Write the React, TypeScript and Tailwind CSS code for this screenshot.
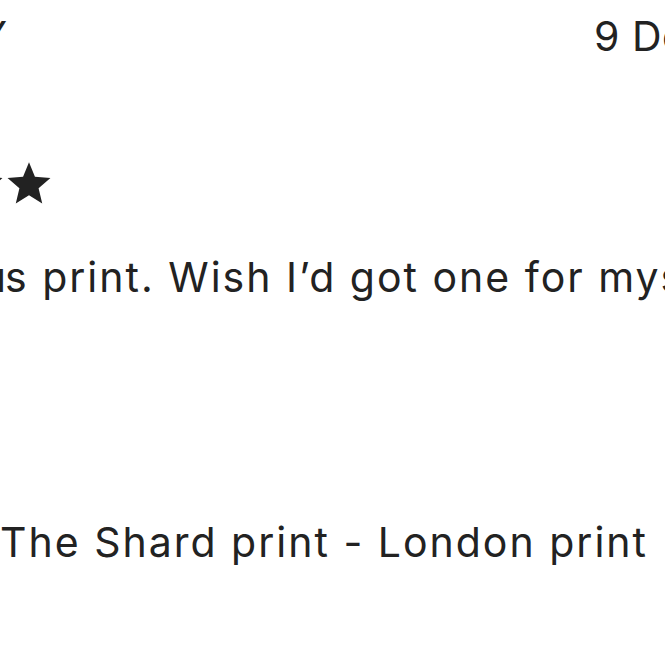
import { ReactNode } from "react";

const font = { fontFamily: "Inter, 'Noto Sans', sans-serif" };

function Star() {
  return (
    <svg viewBox="0 0 24 24" className="h-[46px] w-[46px] shrink-0" fill="#222222">
      <path d="M12 1.2l3.1 7.6 8.1.6-6.2 5.3 1.9 8-6.9-4.3-6.9 4.3 1.9-8-6.2-5.3 8.1-.6z" />
    </svg>
  );
}

// box whose content is right aligned and overflows off the left edge
function EndsAt({ w, children }: { w: string; children: ReactNode }) {
  return <div className={`flex shrink-0 justify-end whitespace-nowrap ${w}`}>{children}</div>;
}

export default function App() {
  return (
    <div
      className="h-[665px] w-[665px] overflow-hidden bg-white text-[41px] leading-[48px] tracking-[2px] text-[#222222]"
      style={font}
    >
      <div className="flex pt-[12px]">
        <EndsAt w="w-[9px]">
          <span>KATY</span>
        </EndsAt>
        <span className="ml-[585px] whitespace-nowrap tracking-[0.5px]">9 Dec, 2021</span>
      </div>

      <div className="mt-[100px] flex">
        <EndsAt w="w-[52px]">
          <div className="flex gap-[2px]">
            <Star />
            <Star />
            <Star />
            <Star />
            <Star />
          </div>
        </EndsAt>
      </div>

      <div className="mt-[47px] flex">
        <EndsAt w="w-[5px]">
          <span className="-mr-[3px]">Fabulou</span>
        </EndsAt>
        <span className="whitespace-nowrap">s print. Wish I’d got one for myself!</span>
      </div>

      <div className="mt-[217px] whitespace-nowrap">
        The Shard print - London print
      </div>
    </div>
  );
}
